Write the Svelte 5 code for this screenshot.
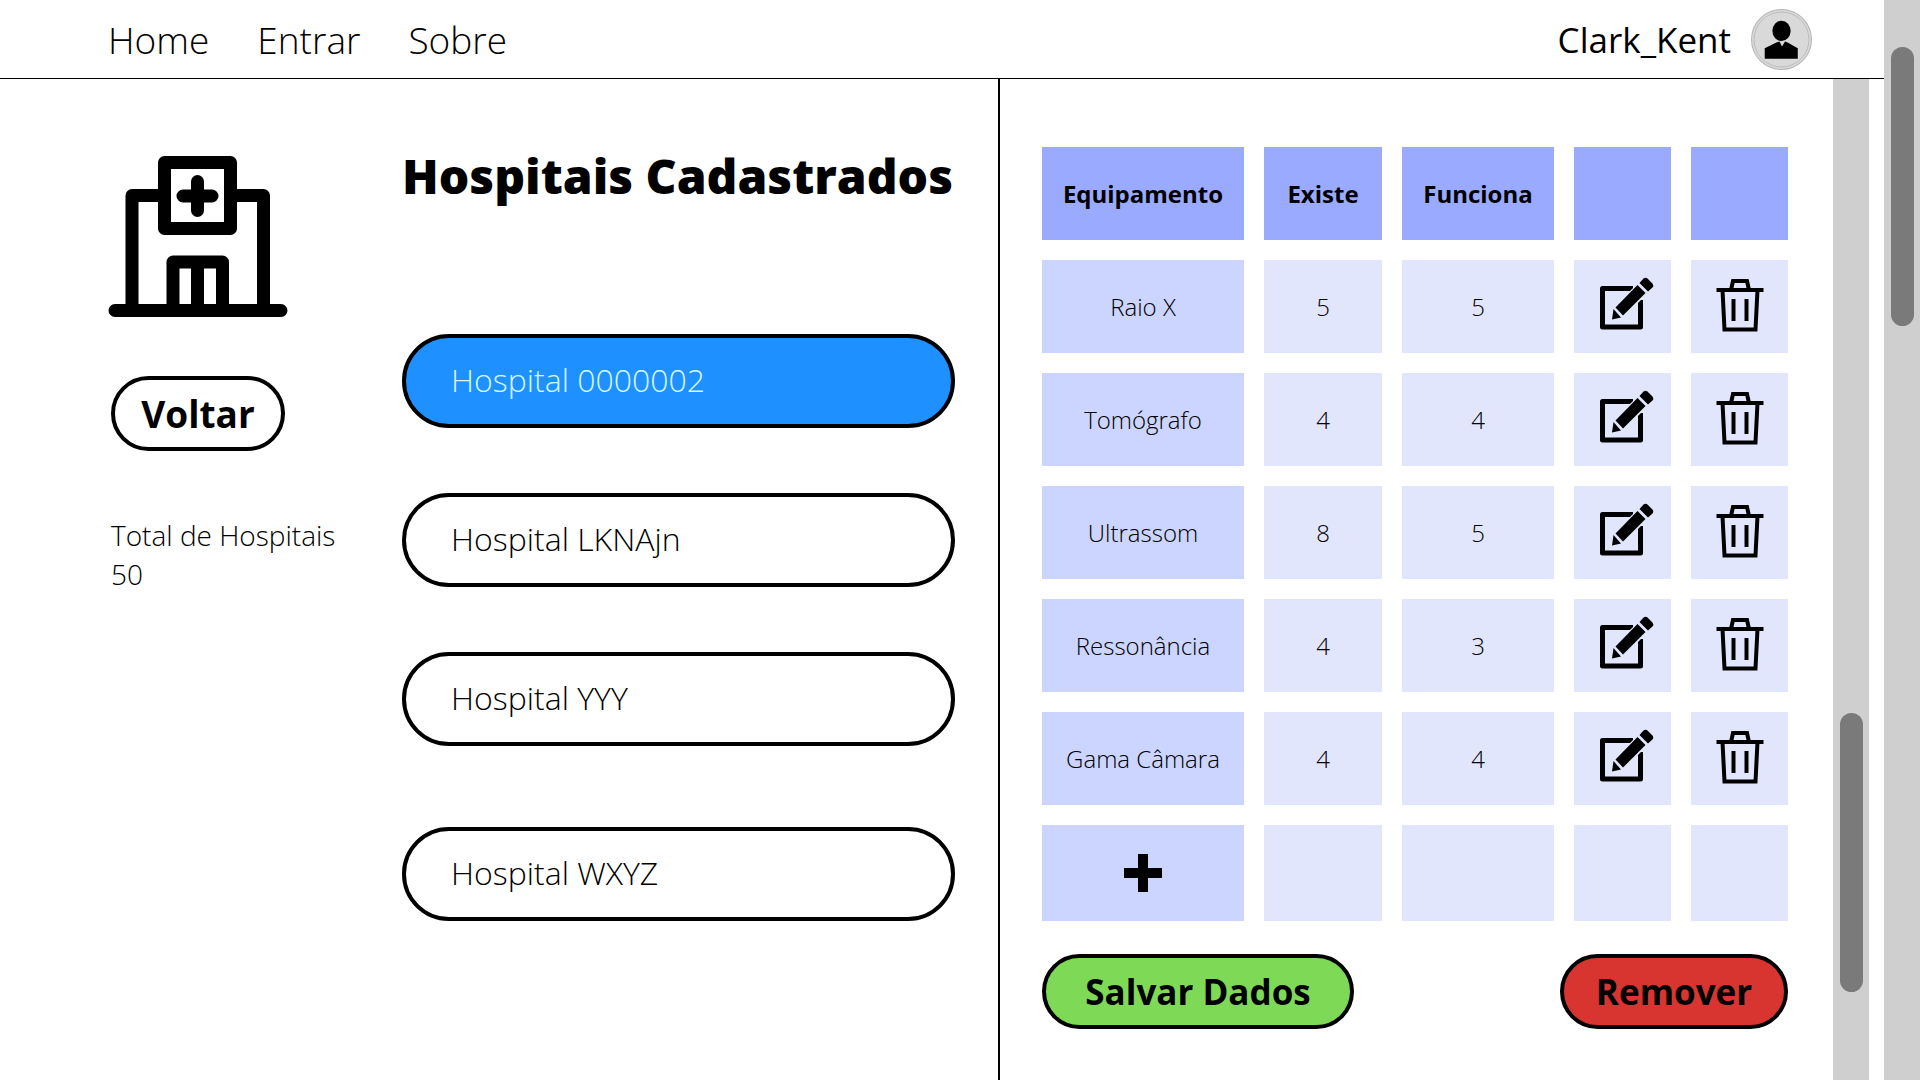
<script>
  const links = ['Home', 'Entrar', 'Sobre'];
  const recent = ['Hospital 0000002', 'Hospital LKNAjn', 'Hospital YYY'];
  const last = 'Hospital WXYZ';
  let selected = $state('Hospital 0000002');

  const equipment = [
    { name: 'Raio X', exists: 5, works: 5 },
    { name: 'Tomógrafo', exists: 4, works: 4 },
    { name: 'Ultrassom', exists: 8, works: 5 },
    { name: 'Ressonância', exists: 4, works: 3 },
    { name: 'Gama Câmara', exists: 4, works: 4 }
  ];
</script>

{#snippet hospital(name)}
  <li>
    <button class="pill hospital" class:selected={selected === name} onclick={() => (selected = name)}>{name}</button>
  </li>
{/snippet}

<div class="page">
  <div class="app">
    <header>
      <nav>
        {#each links as link}
          <a href="#{link.toLowerCase()}">{link}</a>
        {/each}
      </nav>
      <a class="user" href="#perfil">
        <span>Clark_Kent</span>
        <svg class="avatar" viewBox="0 0 60 60" aria-hidden="true">
          <circle cx="30" cy="30" r="29.5" fill="#d9d9d9" stroke="#b5b5b5" />
          <circle cx="30" cy="30" r="27" fill="none" stroke="#b0b0b0" stroke-width="0.7" />
          <ellipse cx="30" cy="21.5" rx="9" ry="10" />
          <path d="M13.5 49V38.5L25 33 28 32 30.5 37 33.500 32 36 33 46 38.500V49Z" />
        </svg>
      </a>
    </header>

    <main>
      <section class="hospitals">
        <aside>
          <svg class="building" viewBox="0 0 180 162" aria-hidden="true" fill="none" stroke="#000" stroke-width="13" stroke-linecap="round" stroke-linejoin="round">
            <path d="M7 154.500H173M24 154V39.500H50M130 39.500H155.500V154M56.500 6.500H122.500V72.500H56.500ZM89.500 25.500V54.500M75 40H104M65 154V106H114.500V154M89.500 106V154" />
          </svg>
          <button class="pill back">Voltar</button>
          <p>Total de Hospitais<br />50</p>
        </aside>
        <div class="list">
          <h1>Hospitais Cadastrados</h1>
          <ul>
            {#each recent as name}
              {@render hospital(name)}
            {/each}
          </ul>
          <ul>
            {@render hospital(last)}
          </ul>
        </div>
      </section>

      <section class="details">
        <table>
          <colgroup>
            <col class="c-name" /><col class="c-exists" /><col class="c-works" /><col class="c-icon" /><col class="c-icon" />
          </colgroup>
          <thead>
            <tr><th scope="col">Equipamento</th><th scope="col">Existe</th><th scope="col">Funciona</th><th></th><th></th></tr>
          </thead>
          <tbody>
            {#each equipment as item}
              <tr>
                <td>{item.name}</td>
                <td>{item.exists}</td>
                <td>{item.works}</td>
                <td>
                  <button class="icon edit" aria-label="Editar {item.name}">
                    <svg width="56" height="56" viewBox="0 0 56 56" aria-hidden="true">
                      <path d="M35 12.500H4.500V51H42.500V24" fill="none" stroke="#000" stroke-width="5" stroke-linejoin="round" />
                      <path d="M13.500 43.500 15 32 41 6 47 1 56 10 50.500 16.500 24.500 42.500Z" fill="#e2e6fd" />
                      <path d="M14 43.500 15.500 33 23 41.500ZM17.500 31.500 39.500 9 47.500 17 25 39.500ZM41.500 7 45.500 2.500Q47.500 1 49.500 2.500L54.500 7.500Q56 9.500 54.500 11.500L50 15.500Z" />
                    </svg>
                  </button>
                </td>
                <td>
                  <button class="icon delete" aria-label="Excluir {item.name}">
                    <svg width="48" height="56" viewBox="0 0 48 56" aria-hidden="true" fill="none" stroke="#000" stroke-width="4">
                      <path d="M.500 14H47.500M15 14 17 5H31L33 14M6.500 14 8.500 53.500H39.500L41.500 14M17.500 23V45M30.500 23V45" />
                    </svg>
                  </button>
                </td>
              </tr>
            {/each}
            <tr class="add">
              <td>
                <button class="icon" aria-label="Adicionar equipamento">
                  <svg width="38" height="38" viewBox="0 0 38 38" aria-hidden="true"><path d="M14 0H24V14H38V24H24V38H14V24H0V14H14Z" /></svg>
                </button>
              </td>
              <td></td><td></td><td></td><td></td>
            </tr>
          </tbody>
        </table>
        <div class="actions">
          <button class="pill save">Salvar Dados</button>
          <button class="pill remove">Remover</button>
        </div>
      </section>

      <div class="track inner"><div class="thumb"></div></div>
    </main>
  </div>
  <div class="track outer"><div class="thumb"></div></div>
</div>

<style>
  :global(body) {
    margin: 0;
    background: #fff;
  }
  .page {
    display: grid;
    grid-template-columns: minmax(0, 1fr) 36px;
    min-height: 100vh;
    color: #000;
    font-family: 'Open Sans', sans-serif;
    font-weight: 300;
  }
  .page * {
    box-sizing: border-box;
  }
  .app {
    display: flex;
    flex-direction: column;
  }
  header {
    display: flex;
    align-items: center;
    justify-content: space-between;
    height: 79px;
    padding: 0 72px 0 108px;
    border-bottom: 1px solid #000;
  }
  nav {
    display: flex;
    gap: 48px;
    font-size: 37px;
  }
  a {
    color: inherit;
    text-decoration: none;
  }
  .user {
    display: flex;
    align-items: center;
    gap: 20px;
    font-size: 35px;
    font-weight: 400;
  }
  .avatar {
    width: 61px;
    height: 61px;
  }
  main {
    flex: 1;
    display: grid;
    grid-template-columns: minmax(0, 1000fr) minmax(0, 833fr) 36px;
    margin-right: 15px;
  }
  .hospitals {
    display: grid;
    grid-template-columns: 294px minmax(0, 1fr);
    padding: 69px 43px 0 108px;
    border-right: 2px solid #000;
  }
  aside {
    display: flex;
    flex-direction: column;
    align-items: flex-start;
    padding-top: 8px;
  }
  .building {
    width: 180px;
    height: 162px;
  }
  p {
    margin: 65px 0 0 3px;
    font-size: 28px;
    line-height: 39px;
  }
  button {
    padding: 0;
    border: 0;
    background: none;
    color: inherit;
    font: inherit;
    cursor: pointer;
  }
  .pill {
    height: 75px;
    border: 4px solid #000;
    border-radius: 48px;
    font-size: 35px;
    font-weight: 700;
  }
  .back {
    width: 174px;
    margin: 58px 0 0 3px;
    font-size: 37px;
  }
  h1 {
    margin: 0 0 130px;
    font-size: 48px;
    font-weight: 800;
    line-height: 56px;
    white-space: nowrap;
  }
  ul {
    display: grid;
    gap: 65px;
    margin: 0 0 81px;
    padding: 0;
    list-style: none;
  }
  .hospital {
    width: 100%;
    height: 94px;
    padding: 0 45px 3px;
    font-size: 32px;
    font-weight: 300;
    text-align: left;
  }
  .selected {
    background: #1e90ff;
    color: #d4f7ff;
  }
  .details {
    padding: 68px 45px 0 42px;
  }
  table {
    width: calc(100% + 40px);
    margin: -20px;
    border-spacing: 20px;
    table-layout: fixed;
    font-size: 24px;
    text-align: center;
  }
  .c-name {
    width: 202px;
  }
  .c-exists {
    width: 118px;
  }
  .c-works {
    width: 152px;
  }
  .c-icon {
    width: 97px;
  }
  th,
  td {
    height: 93px;
    padding: 0;
    background: #e2e6fd;
  }
  th {
    background: #9af;
    font-weight: 700;
  }
  td:first-child {
    background: #ccd5ff;
  }
  .add td {
    height: 96px;
  }
  .icon {
    display: inline-grid;
    vertical-align: middle;
  }
  .edit {
    padding: 0 0 6px 7px;
  }
  .delete {
    padding-bottom: 6px;
  }
  .actions {
    display: flex;
    justify-content: space-between;
    margin-top: 33px;
  }
  .save {
    width: 312px;
    background: #7ed957;
  }
  .remove {
    width: 228px;
    background: #d83530;
  }
  .track {
    background: #cfcfcf;
  }
  .thumb {
    width: 23px;
    height: 279px;
    margin: 0 auto;
    border-radius: 12px;
    background: #7a7a7a;
  }
  .outer {
    padding-top: 47px;
  }
  .inner {
    padding-top: 634px;
  }
</style>
